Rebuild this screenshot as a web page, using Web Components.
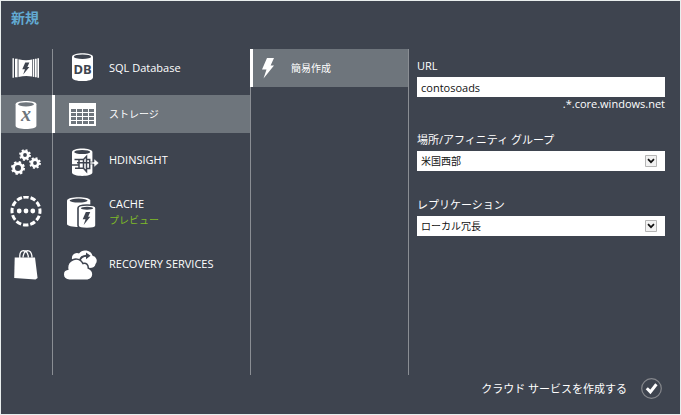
<!DOCTYPE html>
<html lang="ja">
<head>
<meta charset="utf-8">
<title>新規</title>
<style>
  :root { --bg: #3e444f; --sel: #6e757c; --line: #8a8e94; --accent: #62aad2; --preview: #7fba28; }
  * { box-sizing: border-box; }
  body { margin: 0; padding: 1px; min-height: 100vh; display: grid; background: #e9eeee; color: #fff;
    font: 11px/16px "Open Sans", "Noto Sans CJK JP", sans-serif; }
</style>
</head>
<body>
<new-panel></new-panel>
<script>
const bolt = '<path d="M5 0h7L8.600 7.500H12L1.500 20.500 4.500 11.500H0z"/>';
const gear = (x, y, r) => {
  const seg = 2 * Math.PI * r / 16;
  return `<g fill="none" stroke="currentColor"><circle cx="${x}" cy="${y}" r="${r - 1.6}" stroke-width="2.800"/><circle cx="${x}" cy="${y}" r="${r}" stroke-width="2" stroke-dasharray="${seg} ${seg}"/></g>`;
};
const icons = {
  cloud: `<path d="M2.500 6.300h1.400v19.400H2.500zM5 6.700h2.600v18.600H5zM8.500 7.300Q16 8.900 22 7.500v17.100Q16 23.300 8.500 24.900zM22.700 7.200l1.600-.3v18.200l-1.600-.3zM25 6.700h1.700v18.600H25zM27.400 6.300H29v19.400h-1.600z"/><g class="hole" transform="translate(12.300 10.500) scale(.59)">${bolt}</g>`,
  storage: `<path d="M5.600 6.300C5.600 2 26.400 2 26.400 6.300v21.400C26.400 32 5.600 32 5.600 27.700z"/><ellipse class="hole" cx="16" cy="6.300" rx="8" ry="2.100"/><text class="hole" x="16" y="23" text-anchor="middle" font-family="Liberation Serif" font-weight="700" font-style="italic" font-size="20">x</text>`,
  gears: gear(15, 11, 4.9) + gear(8, 24, 6) + gear(25, 19, 4.9),
  ring: `<circle cx="16" cy="15" r="14" fill="none" stroke="currentColor" stroke-width="3" stroke-dasharray="5.330 2" transform="rotate(-101 16 15)"/><circle cx="9.200" cy="15" r="2.400"/><circle cx="16" cy="15" r="2.400"/><circle cx="22.800" cy="15" r="2.400"/>`,
  bag: `<path d="M4.700 9.500H25L27.600 30 25.500 31.500 4.200 30z"/><path fill="none" stroke="currentColor" stroke-width="1.300" d="M9.800 11V7.500Q10 2.800 13.500 2.600 17.800 2.600 18.400 9.500M13 9.500Q13.800 2.600 17.500 2.600 21.800 2.800 22 9.500"/>`,
  sql: `<path d="M9 4.800C9-.1 30-.1 30 4.800v20.600c0 4.800-21 4.800-21 0z"/><ellipse class="hole" cx="19.500" cy="4.700" rx="8.600" ry="2.300"/><text class="hole" x="19.500" y="22" text-anchor="middle" font-family="Noto Sans" font-weight="700" font-size="13">DB</text>`,
  table: `<path d="M6 5h27v23H6z"/><path class="hole" d="${[11, 15, 19, 23].map(y => [8, 14, 20, 26].map(x => `M${x} ${y}h5v3h-5z`).join('')).join('')}"/>`,
  hd: `<path d="M9 8C9 3.300 29.400 3.300 29.400 8v20.500c0 4.500-20.400 4.500-20.400 0z"/><ellipse class="hole" cx="19.200" cy="8" rx="8" ry="2"/><path fill="none" stroke="var(--hole)" stroke-width="1.500" d="M9 21h7.500M11.500 15.500h9l3-3.200v15.200l-3-3.200h-8.500M16 15.500v9M20.500 15.500v9M14 18.800h18M23.500 15.500h3.200v9h-3.200"/><path d="M27 18h4v-3.300l5 4.300-5 4.300V20h-4z" stroke="var(--hole)" stroke-width=".6"/>`,
  cache: `<path d="M4 4.500C4 0 27.300 0 27.300 4.500V28C27.300 32 4 32 4 28z"/><ellipse class="hole" cx="15.600" cy="4.600" rx="9" ry="2"/><path stroke="var(--hole)" stroke-width="1.600" d="M15 12c0-4 18-4 18 0v17.500c0 4-18 4-18 0z"/><ellipse class="hole" cx="24" cy="12.300" rx="6.200" ry="1.500"/><g class="hole" transform="translate(19.700 16) scale(.63)">${bolt}</g>`,
  recovery: `<path d="M9 11a5 5 0 0 1 5-6q1.500 0 2 .5a7.500 7 0 0 1 13.500 2.300 5 5 0 0 1 3 8.200q-.5 4-6 4H14z"/><path fill="none" stroke="var(--hole)" stroke-width="1.900" d="M16.500 13.500q1-5.700 7.500-5.700"/><path class="hole" d="M23 4.600l4.600 3.200-4.600 3.400z"/><path stroke="var(--hole)" stroke-width="1.500" d="M6.500 32.300C-2 31.500-1 22 4.700 21.300 3.300 12 15 7 20 15.500c3-1 5.500 1 5.200 4.500 6.500 2.500 6.300 11-.7 12.300z"/>`,
  bolt: `<g transform="translate(9 6)">${bolt}</g>`,
  chevron: `<path fill="#f2f2f2" stroke="#b5b5b5" d="M.5.5h11v11H.5z"/><path fill="none" stroke="#111" stroke-width="1.700" d="M3 4.200l3 3 3-3"/>`,
  check: `<circle cx="10.500" cy="10.500" r="9.800" fill="none" stroke="#85878c" stroke-width="1.200"/><path fill="none" stroke="currentColor" stroke-width="3" d="M5.800 10.200l3.600 3.700 6-7.600"/>`
};
const base = '<style>*{box-sizing:border-box}button,input,select{font:inherit;color:inherit;border:0;border-radius:0;margin:0;padding:0}</style>';
const define = (name, render) => customElements.define(name, class extends HTMLElement {
  connectedCallback() {
    if (this.shadowRoot) return;
    this.attachShadow({ mode: 'open' }).innerHTML = base + render(this);
  }
});

define('ui-icon', el => {
  const w = el.getAttribute('w') || 32, h = el.getAttribute('h') || 32;
  return `<style>:host{display:block;flex:none}svg{display:block;fill:currentColor}.hole{fill:var(--hole)}</style>
  <svg width="${w}" height="${h}" viewBox="0 0 ${w} ${h}" aria-hidden="true">${icons[el.getAttribute('name')]}</svg>`;
});

define('rail-item', el => `<style>
  :host{display:block;--hole:var(--bg)} :host([selected]){--hole:var(--sel)}
  button{display:flex;align-items:center;width:100%;height:100%;padding-left:9px;background:var(--hole)}
  </style><button type="button" aria-label="${el.getAttribute('label')}"><ui-icon name="${el.getAttribute('icon')}"></ui-icon></button>`);

define('menu-item', el => `<style>
  :host{display:block;margin-left:-1px;--hole:var(--bg)} :host([selected]){--hole:var(--sel)}
  button{display:flex;align-items:center;gap:10px;width:100%;height:100%;text-align:left;background:none;border-left:3px solid transparent;padding-left:var(--inset,8px)}
  :host([selected]) button{background:var(--sel);border-color:#fff}
  :host([kana]) button{font-size:10px}
  ::slotted(small){display:block;font-size:10px;color:var(--preview)}
  </style><button type="button"><ui-icon name="${el.getAttribute('icon')}" w="${el.getAttribute('w') || 36}"></ui-icon><span><slot></slot><slot name="note"></slot></span></button>`);

define('form-field', el => {
  const value = el.getAttribute('value'), label = el.getAttribute('label');
  const control = el.hasAttribute('choice')
    ? `<div class="pick"><select id="c"><option>${value}</option></select><ui-icon name="chevron" w="12" h="12"></ui-icon></div>`
    : `<input id="c" type="text" value="${value}">`;
  return `<style>
  :host{display:block} :host([choice]){padding-bottom:5px}
  label{display:block;line-height:18px;padding-bottom:2px}
  input,select{display:block;width:100%;height:20px;padding:0 4px;background:#fff;color:#111;appearance:none}
  select{font-size:10px}
  .pick{display:grid;align-items:center}
  .pick>*{grid-area:1/1}
  .pick ui-icon{justify-self:end;margin-right:8px;pointer-events:none}
  .hint{line-height:14px;text-align:right}
  </style><label for="c">${label}</label>${control}<div class="hint"><slot></slot></div>`;
});

define('create-bar', () => `<style>
  :host{display:flex;justify-content:flex-end;padding:3px 18px 15px}
  button{display:flex;align-items:center;gap:14px;background:none}
  </style><button type="button"><span><slot></slot></span><ui-icon name="check" w="21" h="21"></ui-icon></button>`);

define('new-panel', () => `<style>
  :host{display:flex;flex-direction:column;background:var(--bg)}
  h1{margin:0;padding:7px 10px 21px;font-size:14px;line-height:20px;font-weight:700;color:var(--accent)}
  main{flex:1;display:grid;grid-template-columns:51px 198px 158px minmax(0,1fr)}
  nav{display:grid;grid-template-rows:38px 38px 38px 50px 38px;gap:8px;align-content:start}
  nav+nav,form{border-left:1px solid var(--line)}
  .actions{--inset:0px}
  form{display:flex;flex-direction:column;gap:20px;padding:8px 15px 0 8px}
  </style>
  <h1>新規</h1>
  <main>
    <nav aria-label="カテゴリ">
      <rail-item icon="cloud" label="コンピューティング"></rail-item>
      <rail-item icon="storage" label="データ サービス" selected></rail-item>
      <rail-item icon="gears" label="アプリ サービス"></rail-item>
      <rail-item icon="ring" label="ネットワーク サービス"></rail-item>
      <rail-item icon="bag" label="ストア"></rail-item>
    </nav>
    <nav aria-label="サービス">
      <menu-item icon="sql">SQL Database</menu-item>
      <menu-item icon="table" selected kana>ストレージ</menu-item>
      <menu-item icon="hd">HDINSIGHT</menu-item>
      <menu-item icon="cache">CACHE<small slot="note">プレビュー</small></menu-item>
      <menu-item icon="recovery">RECOVERY SERVICES</menu-item>
    </nav>
    <nav class="actions" aria-label="作成方法">
      <menu-item icon="bolt" w="28" selected kana>簡易作成</menu-item>
    </nav>
    <form>
      <form-field label="URL" value="contosoads">.*.core.windows.net</form-field>
      <form-field choice label="場所/アフィニティ グループ" value="米国西部"></form-field>
      <form-field choice label="レプリケーション" value="ローカル冗長"></form-field>
    </form>
  </main>
  <create-bar>クラウド サービスを作成する</create-bar>`);
</script>
</body>
</html>
